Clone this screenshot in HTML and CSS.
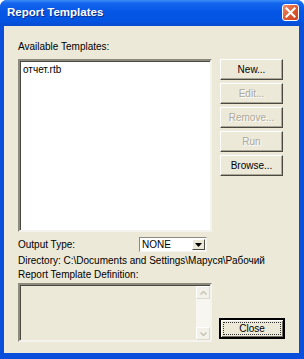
FILE: index.html
```html
<!DOCTYPE html>
<html lang="en">
  <head>
    <meta charset="UTF-8" />
    <title>Report Templates</title>
    <link rel="stylesheet" href="styles.css">
  </head>
  <body>
    <div class="window">
      <div class="titlebar">
        <span class="title">Report Templates</span>
        <div class="close-x">
          <svg width="11" height="11" viewBox="0 0 11 11">
            <path d="M1.5 1.5 L9.5 9.5 M9.5 1.5 L1.5 9.5" stroke="#fff" stroke-width="2.2" stroke-linecap="square" />
          </svg>
        </div>
      </div>
      <div class="client">
        <div class="top">
          <div class="left-col">
            <div class="label label-avail">Available Templates:</div>
            <div class="listbox">
              <div class="list-item">отчет.rtb</div>
            </div>
          </div>
          <div class="buttons">
            <div class="btn">New...</div>
            <div class="btn disabled">Edit...</div>
            <div class="btn disabled">Remove...</div>
            <div class="btn disabled">Run</div>
            <div class="btn">Browse...</div>
          </div>
        </div>

        <div class="output-row">
          <span class="label output-label">Output Type:</span>
          <div class="combo">
            <span class="combo-text">NONE</span>
            <div class="combo-btn">
              <svg width="7" height="4" viewBox="0 0 7 4"><path d="M0 0 H7 L3.5 4 Z" fill="#000" /></svg>
            </div>
          </div>
        </div>

        <div class="label dir-line">Directory: C:\Documents and Settings\Маруся\Рабочий</div>
        <div class="label def-label">Report Template Definition:</div>

        <div class="bottom">
          <div class="definition">
            <div class="def-body"></div>
            <div class="scrollbar">
              <div class="sb-arrow">
                <svg width="7" height="4" viewBox="0 0 7 4"><path d="M0.5 3.5 L3.5 0.5 L6.5 3.5" stroke="#c5c2b2" stroke-width="1.4" fill="none" /></svg>
              </div>
              <div class="sb-track"></div>
              <div class="sb-arrow">
                <svg width="7" height="4" viewBox="0 0 7 4"><path d="M0.5 0.5 L3.5 3.5 L6.5 0.5" stroke="#c5c2b2" stroke-width="1.4" fill="none" /></svg>
              </div>
            </div>
          </div>
          <div class="btn default-btn"><span class="focus">Close</span></div>
        </div>
      </div>
    </div>
  </body>
</html>
```

FILE: styles.css
```css
* {
  margin: 0;
  padding: 0;
  box-sizing: border-box;
}

body {
  font-family: "Liberation Sans", Arial, sans-serif;
  font-size: 10px;
  color: #000;
  background: #fff;
}

.window {
  width: 304px;
  height: 359px;
  display: flex;
  flex-direction: column;
  background: #0a4fdc;
  border-radius: 7px 7px 0 0;
  overflow: hidden;
}

/* title bar */
.titlebar {
  height: 26px;
  display: flex;
  align-items: center;
  justify-content: space-between;
  padding: 0 5px 2px 7px;
  background: linear-gradient(#3d8ef8 0%, #1466ee 12%, #0556e6 45%, #0454e2 80%, #0a4bd0 100%);
}

.title {
  color: #fff;
  font-weight: bold;
  font-size: 11.5px;
  text-shadow: 1px 1px 0 #0a2f8c;
}

.close-x {
  width: 17px;
  height: 17px;
  border: 1px solid #fff;
  border-radius: 3px;
  background: linear-gradient(135deg, #f0906c 0%, #e05a30 50%, #c8401c 100%);
  display: flex;
  align-items: center;
  justify-content: center;
}

/* client area */
.client {
  flex: 1;
  margin: 0 5px 6px 4px;
  background: #ece9d8;
  padding: 14px 0 0 14px;
  display: flex;
  flex-direction: column;
}

.label {
  line-height: 13px;
  white-space: nowrap;
}

.top {
  display: flex;
}

.left-col {
  width: 194px;
}

.label-avail {
  margin-bottom: 6px;
}

.listbox {
  height: 173px;
  background: #fff;
  border: 2px solid;
  border-color: #8c8a7e #f4f3ee #f4f3ee #8c8a7e;
  box-shadow: inset 1px 1px 0 #4a4940;
  padding: 2px 3px;
}

.list-item {
  line-height: 13px;
}

.buttons {
  margin-left: 8px;
  margin-top: 19px;
  display: flex;
  flex-direction: column;
  gap: 3px;
}

.btn {
  width: 63px;
  height: 21px;
  display: flex;
  align-items: center;
  justify-content: center;
  background: #ece9d8;
  border: 1px solid;
  border-color: #fff #4a4940 #4a4940 #fff;
  box-shadow: inset -1px -1px 0 #aca899;
}

.btn.disabled {
  color: #aca899;
  text-shadow: 1px 1px 0 #fff;
}

/* output type */
.output-row {
  display: flex;
  align-items: center;
  margin-top: 5px;
  height: 15px;
}

.output-label {
  width: 121px;
}

.combo {
  width: 68px;
  height: 15px;
  display: flex;
  align-items: center;
  justify-content: space-between;
  background: #fff;
  border: 1px solid;
  border-color: #8c8a7e #f4f3ee #f4f3ee #8c8a7e;
  padding-left: 2px;
}

.combo-text {
  line-height: 12px;
}

.combo-btn {
  width: 13px;
  height: 11px;
  margin-right: 1px;
  background: #ece9d8;
  border: 1px solid;
  border-color: #fff #4a4940 #4a4940 #fff;
  display: flex;
  align-items: center;
  justify-content: center;
}

.dir-line {
  margin-top: 2px;
}

.def-label {
  margin-top: 1px;
  margin-bottom: 2px;
}

/* definition box */
.bottom {
  display: flex;
  align-items: flex-end;
}

.definition {
  width: 194px;
  height: 59px;
  display: flex;
  border: 2px solid;
  border-color: #8c8a7e #f4f3ee #f4f3ee #8c8a7e;
  box-shadow: inset 1px 1px 0 #4a4940;
  background: #ece9d8;
}

.def-body {
  flex: 1;
}

.scrollbar {
  width: 14px;
  margin: 1px 0 0 0;
  display: flex;
  flex-direction: column;
  background: #f7f6f1;
}

.sb-arrow {
  height: 13px;
  display: flex;
  align-items: center;
  justify-content: center;
  background: #f3f2ea;
  border: 1px solid;
  border-color: #fff #dcd9cc #dcd9cc #fff;
}

.sb-track {
  flex: 1;
}

.default-btn {
  width: 66px;
  height: 21px;
  margin: 0 0 3px 7px;
  border: 2px solid;
  border-color: #000;
  box-shadow: inset 1px 1px 0 #fff, inset -1px -1px 0 #716f64;
  padding: 2px;
}

.focus {
  width: 100%;
  height: 100%;
  display: flex;
  align-items: center;
  justify-content: center;
  border: 1px dotted #333;
}
```
